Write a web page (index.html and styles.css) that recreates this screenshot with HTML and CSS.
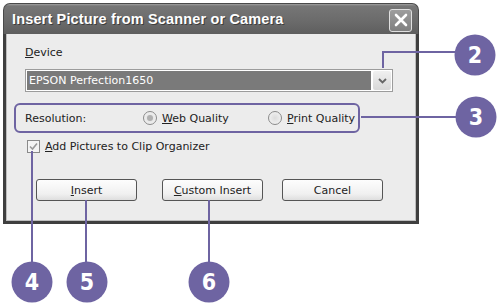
FILE: index.html
```html
<!doctype html>
<html lang="en">

<head>
    <meta charset="utf-8">
    <title>Insert Picture from Scanner or Camera</title>
    <link rel="stylesheet" href="styles.css">
</head>

<body>
    <div class="page">
        <div class="dlg">
            <div class="dlg-title">
                <span class="dlg-caption">Insert Picture from Scanner or Camera</span>
                <span class="dlg-close">
                    <svg width="14" height="14" viewBox="0 0 14 14">
                        <path d="M2 2 L12 12 M12 2 L2 12" stroke="#fff" stroke-width="2.6" stroke-linecap="round" />
                    </svg>
                </span>
            </div>
            <div class="dlg-body">
                <div class="lbl-device"><u>D</u>evice</div>
                <div class="combo">
                    <div class="combo-text">EPSON Perfection1650</div>
                    <div class="combo-btn">
                        <svg width="9" height="6" viewBox="0 0 9 6">
                            <path d="M1 1 L4.5 4.5 L8 1" fill="none" stroke="#666" stroke-width="1.8" />
                        </svg>
                    </div>
                </div>
                <div class="res-row">
                    <span class="res-lbl">Resolution:</span>
                    <span class="radio on"></span>
                    <span class="opt-web"><u>W</u>eb Quality</span>
                    <span class="radio"></span>
                    <span class="opt-print"><u>P</u>rint Quality</span>
                </div>
                <div class="chk-row">
                    <span class="chk">
                        <svg width="9" height="9" viewBox="0 0 9 9">
                            <path d="M1 4.5 L3.5 7 L8 1.5" fill="none" stroke="#9a9a9a" stroke-width="1.6" />
                        </svg>
                    </span>
                    <span><u>A</u>dd Pictures to Clip Organizer</span>
                </div>
                <div class="btn-row">
                    <span class="btn btn-insert"><u>I</u>nsert</span>
                    <span class="btn btn-custom"><u>C</u>ustom Insert</span>
                    <span class="btn btn-cancel">Cancel</span>
                </div>
            </div>
        </div>

        <!-- callouts -->
        <svg class="callouts" width="500" height="307" viewBox="0 0 500 307">
            <g stroke="#6e64a2" stroke-width="2" fill="none">
                <path d="M383 68 V52 H460" />
                <path d="M361 117 H460" />
                <path d="M32 151 V265" />
                <path d="M86 200 V265" />
                <path d="M209 200 V265" />
            </g>
            <g fill="#6e64a2">
                <circle cx="475" cy="55" r="20.5" />
                <circle cx="476" cy="117" r="20.5" />
                <circle cx="32" cy="282" r="20.5" />
                <circle cx="87" cy="282" r="20.5" />
                <circle cx="209" cy="282" r="20.5" />
            </g>
            <g class="callout-num">
                <text x="475" y="63">2</text>
                <text x="476" y="125">3</text>
                <text x="32" y="290">4</text>
                <text x="87" y="290">5</text>
                <text x="209" y="290">6</text>
            </g>
        </svg>
    </div>
</body>

</html>
```

FILE: styles.css
```css
html,
body {
    margin: 0;
    background-color: #fff;
}

.page {
    position: relative;
    width: 500px;
    height: 307px;
    overflow: hidden;
    font-family: "DejaVu Sans", sans-serif;
    font-size: 11px;
    color: #222;
}

.dlg {
    margin: 3px 0 0 3px;
    width: 416px;
    height: 221px;
    display: flex;
    flex-direction: column;
    box-sizing: border-box;
}

.dlg-title {
    height: 30px;
    display: flex;
    align-items: center;
    justify-content: space-between;
    padding: 0 6px 0 8px;
    border-radius: 7px 7px 0 0;
    background: linear-gradient(#a0a0a0 0, #767676 2px, #6a6a6a 60%, #5e5e5e 100%);
    border: 1px solid #4a4a4a;
    border-bottom: none;
}

.dlg-caption {
    color: #fff;
    font-family: "Liberation Sans", sans-serif;
    font-weight: bold;
    font-size: 14.5px;
    letter-spacing: 0.15px;
    text-shadow: 1px 1px 0 #3e3e3e;
}

.dlg-close {
    width: 21px;
    height: 21px;
    display: flex;
    align-items: center;
    justify-content: center;
    background: linear-gradient(#9d9d9d, #808080);
    border: 1px solid #e0e0e0;
    border-radius: 3px;
    margin-top: 2px;
}

.dlg-body {
    flex: 1;
    background: #ececec;
    border: 3px solid #3f3f3f;
    border-top: none;
    box-shadow: inset 1px 0 0 #bdbdbd, inset -1px -1px 0 #bdbdbd;
    display: flex;
    flex-direction: column;
}

.lbl-device {
    margin: 12px 0 0 19px;
    height: 14px;
    line-height: 14px;
}

.combo {
    margin: 9px 0 0 19px;
    width: 368px;
    height: 23px;
    box-sizing: border-box;
    border: 1px solid #9c9c9c;
    background: #fff;
    display: flex;
    padding: 1px;
}

.combo-text {
    flex: 1;
    background: #7a7a7a;
    color: #fff;
    line-height: 19px;
    padding-left: 2px;
    margin-right: 2px;
}

.combo-btn {
    width: 18px;
    display: flex;
    align-items: center;
    justify-content: center;
    background: linear-gradient(#f0f0f0, #d8d8d8);
    border-radius: 2px;
}

.res-row {
    margin: 11px 0 0 8px;
    width: 346px;
    height: 30px;
    box-sizing: border-box;
    border: 2px solid #6e64a2;
    border-radius: 6px;
    display: flex;
    align-items: center;
    padding-left: 9px;
}

.res-lbl {
    width: 118px;
}

.radio {
    width: 12px;
    height: 12px;
    border-radius: 50%;
    border: 1px solid #8a8a8a;
    background: radial-gradient(#dcdcdc, #f7f7f7);
    display: flex;
    align-items: center;
    justify-content: center;
    margin-right: 5px;
}

.radio.on::after {
    content: "";
    width: 6px;
    height: 6px;
    border-radius: 50%;
    background: #b0b0b0;
}

.opt-web {
    width: 106px;
}

.chk-row {
    margin: 6px 0 0 21px;
    height: 14px;
    display: flex;
    align-items: center;
}

.chk {
    width: 11px;
    height: 11px;
    border: 1px solid #8a8a8a;
    background: #f4f4f4;
    display: flex;
    align-items: center;
    justify-content: center;
    margin-right: 5px;
}

.btn-row {
    margin: 26px 0 0 30px;
    display: flex;
}

.btn {
    height: 22px;
    box-sizing: border-box;
    border: 1px solid #555;
    border-radius: 3px;
    background: linear-gradient(#fdfdfd, #f0f0f0 70%, #dedede);
    display: flex;
    align-items: center;
    justify-content: center;
}

.btn-insert {
    width: 101px;
}

.btn-custom {
    width: 101px;
    margin-left: 25px;
}

.btn-cancel {
    width: 101px;
    margin-left: 19px;
}

.callouts {
    position: absolute;
    left: 0;
    top: 0;
    pointer-events: none;
}

.callout-num text {
    fill: #fff;
    font-family: "Liberation Sans Narrow", "DejaVu Sans Condensed", sans-serif;
    font-weight: bold;
    font-size: 23px;
    text-anchor: middle;
}
```
